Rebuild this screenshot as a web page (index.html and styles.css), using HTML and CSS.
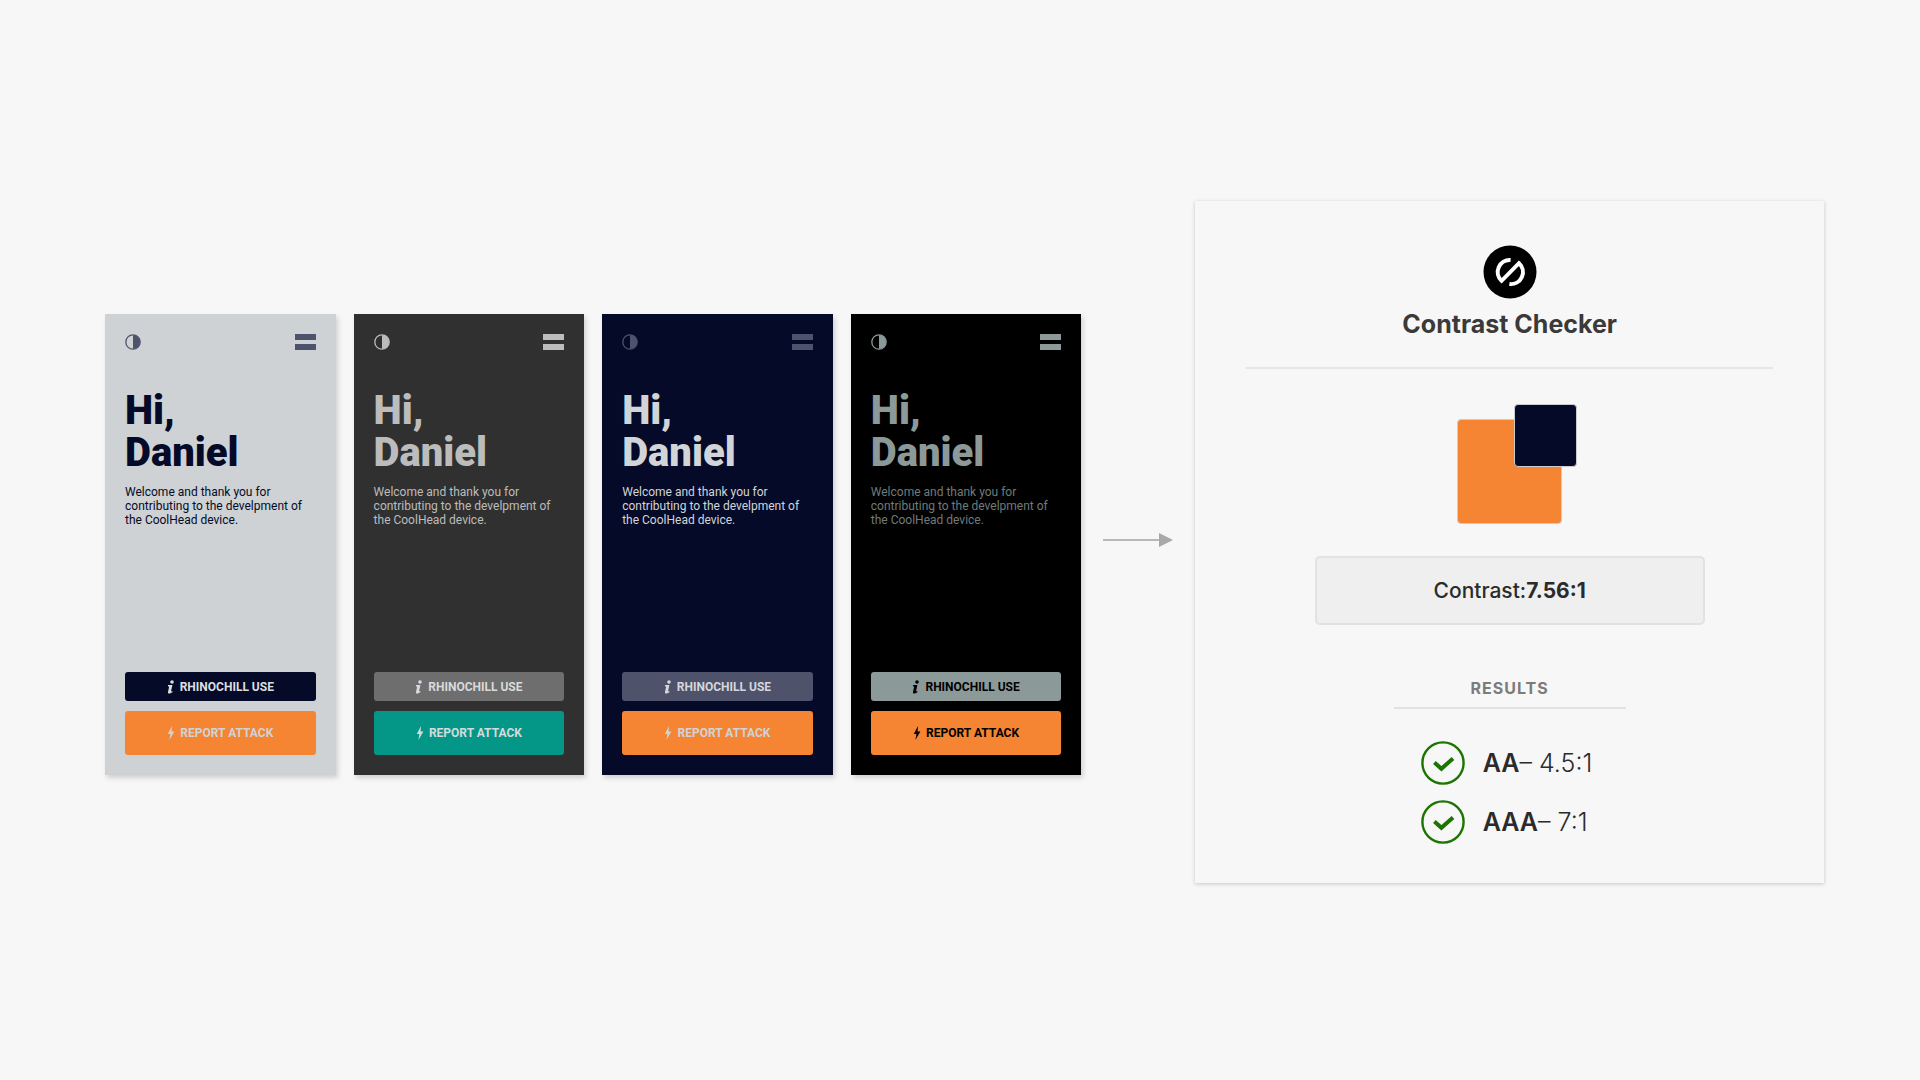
FILE: index.html
```html
<!DOCTYPE html>
<html lang="en">
<head>
    <meta charset="UTF-8">
    <title>Contrast Checker</title>
    <link rel="stylesheet" href="styles.css">
</head>
<body>
<svg class="defs" aria-hidden="true">
    <symbol id="half" viewBox="0 0 16 16">
        <circle cx="8" cy="8" r="7.2" fill="none" stroke="currentColor" stroke-width="1.3"/>
        <path d="M8 1a7 7 0 0 1 0 14z" fill="currentColor"/>
    </symbol>
    <symbol id="menu" viewBox="0 0 21 16">
        <path d="M0 0h21v6H0zM0 10h21v6H0z" fill="currentColor"/>
    </symbol>
    <symbol id="info" viewBox="0 0 8 14">
        <circle cx="5" cy="2" r="1.8" fill="currentColor"/>
        <path d="M1 5H5.4L4 11.6l1.4-.5v1.2L3 13.6H1.4L.9 12.6 2.2 6.6 1 6.4z" fill="currentColor"/>
    </symbol>
    <symbol id="bolt" viewBox="0 0 8 14">
        <path d="M5 0L.8 8h2.6L2.4 14 7.4 5.6H4.6z" fill="currentColor"/>
    </symbol>
    <symbol id="check" viewBox="0 0 44 44">
        <circle cx="22" cy="22" r="20.6" fill="none" stroke="#1c7500" stroke-width="2.4"/>
        <path d="M13.4 21.4l7 6.4L32 17.4" fill="none" stroke="#1c7500" stroke-width="4"/>
    </symbol>
</svg>
<main class="board">
    <section class="phones">
        <article class="phone light">
            <div class="bar">
                <button class="icon" aria-label="Theme"><svg width="16" height="16"><use href="#half"/></svg></button>
                <button class="icon" aria-label="Menu"><svg width="21" height="16"><use href="#menu"/></svg></button>
            </div>
            <h2>Hi,<br>Daniel</h2>
            <p>Welcome and thank you for<br>contributing to the develpment of<br>the CoolHead device.</p>
            <button class="btn use"><svg width="8" height="14"><use href="#info"/></svg>RHINOCHILL USE</button>
            <button class="btn report"><svg width="8" height="14"><use href="#bolt"/></svg>REPORT ATTACK</button>
        </article>
        <article class="phone gray">
            <div class="bar">
                <button class="icon" aria-label="Theme"><svg width="16" height="16"><use href="#half"/></svg></button>
                <button class="icon" aria-label="Menu"><svg width="21" height="16"><use href="#menu"/></svg></button>
            </div>
            <h2>Hi,<br>Daniel</h2>
            <p>Welcome and thank you for<br>contributing to the develpment of<br>the CoolHead device.</p>
            <button class="btn use"><svg width="8" height="14"><use href="#info"/></svg>RHINOCHILL USE</button>
            <button class="btn report"><svg width="8" height="14"><use href="#bolt"/></svg>REPORT ATTACK</button>
        </article>
        <article class="phone navy">
            <div class="bar">
                <button class="icon" aria-label="Theme"><svg width="16" height="16"><use href="#half"/></svg></button>
                <button class="icon" aria-label="Menu"><svg width="21" height="16"><use href="#menu"/></svg></button>
            </div>
            <h2>Hi,<br>Daniel</h2>
            <p>Welcome and thank you for<br>contributing to the develpment of<br>the CoolHead device.</p>
            <button class="btn use"><svg width="8" height="14"><use href="#info"/></svg>RHINOCHILL USE</button>
            <button class="btn report"><svg width="8" height="14"><use href="#bolt"/></svg>REPORT ATTACK</button>
        </article>
        <article class="phone black">
            <div class="bar">
                <button class="icon" aria-label="Theme"><svg width="16" height="16"><use href="#half"/></svg></button>
                <button class="icon" aria-label="Menu"><svg width="21" height="16"><use href="#menu"/></svg></button>
            </div>
            <h2>Hi,<br>Daniel</h2>
            <p>Welcome and thank you for<br>contributing to the develpment of<br>the CoolHead device.</p>
            <button class="btn use"><svg width="8" height="14"><use href="#info"/></svg>RHINOCHILL USE</button>
            <button class="btn report"><svg width="8" height="14"><use href="#bolt"/></svg>REPORT ATTACK</button>
        </article>
    </section>
    <svg class="arrow" width="70" height="18" viewBox="0 0 70 18" aria-hidden="true">
        <path d="M0 7h57" stroke="#b9b9b9" stroke-width="2"/>
        <path d="M56 0l14 7-14 7z" fill="#a9a9a9"/>
    </svg>
    <section class="checker">
        <header>
            <svg width="54" height="54" viewBox="0 0 54 54" aria-hidden="true">
                <circle cx="27" cy="27" r="26.5"/>
                <path d="M27.6 15A12 12 0 0 0 18.6 35.8L36 18.2A12 12 0 0 1 26.4 39" fill="none" stroke="#fff" stroke-width="4"/>
            </svg>
            <h1>Contrast Checker</h1>
        </header>
        <div class="swatches">
            <div class="swatch back"></div>
            <div class="swatch front"></div>
        </div>
        <div class="ratio">Contrast:<b>7.56:1</b></div>
        <h3>RESULTS</h3>
        <ul class="results">
            <li><svg width="44" height="44"><use href="#check"/></svg><span><b>AA</b>– 4.5:1</span></li>
            <li><svg width="44" height="44"><use href="#check"/></svg><span><b>AAA</b>– 7:1</span></li>
        </ul>
    </section>
</main>
</body>
</html>
```
FILE: styles.css
```css
* {
    margin: 0;
    padding: 0;
    box-sizing: border-box;
}

body {
    background: #f7f7f7;
    font-family: Inter, "Liberation Sans", sans-serif;
}

ul {
    list-style: none;
}

svg {
    display: block;
    flex: none;
}

button {
    border: 0;
    cursor: pointer;
}

.defs {
    display: none;
}

.board {
    min-height: 100vh;
    padding: 3px 96px 0 105px;
    display: grid;
    grid-template-columns: 977fr auto 629fr;
    align-items: center;
    gap: 22px;
}

.phones {
    display: grid;
    grid-template-columns: repeat(4, 1fr);
    gap: 18px;
    padding-top: 6px;
}

.phone {
    min-height: 461px;
    padding: 20px;
    display: flex;
    flex-direction: column;
    box-shadow: 2px 3px 5px rgba(0, 0, 0, 0.16);
    font-family: Roboto, sans-serif;
}

.bar {
    display: flex;
    justify-content: space-between;
    margin-bottom: 40px;
}

.icon {
    background: none;
    color: inherit;
}

.phone h2 {
    font-size: 40px;
    font-weight: 900;
    line-height: 42px;
    margin-bottom: 11px;
}

.phone p {
    font-size: 12px;
    line-height: 14px;
    white-space: nowrap;
    margin-bottom: auto;
}

.btn {
    display: flex;
    align-items: center;
    justify-content: center;
    gap: 5px;
    border-radius: 3px;
    font-family: Roboto, sans-serif;
    font-size: 12px;
    font-weight: 700;
}

.use {
    height: 29px;
    margin-bottom: 10px;
}

.report {
    height: 44px;
    background: #f58532;
}

.light {
    background: #ced2d5;
    color: #040a28;
}

.light .icon {
    color: #4e536d;
}

.light .use {
    background: #040a28;
    color: #dcdfe1;
}

.light .report, .navy .report {
    color: #d0d3d6;
}

.gray {
    background: #303030;
    color: #bcbcbc;
}

.gray .use {
    background: #6e6e6e;
    color: #d8dadb;
}

.gray .report {
    background: #049788;
    color: #d5dadb;
}

.navy {
    background: #040a28;
    color: #d2d5d7;
}

.navy .icon {
    color: #4e536d;
}

.navy .use {
    background: #4e526b;
    color: #d5d7dc;
}

.black {
    background: #000;
    color: #8b9998;
}

.black p {
    color: #6f7b7a;
}

.black .use {
    background: #8b9998;
    color: #000;
}

.black .report {
    color: #000;
}

.checker {
    padding: 44px 51px 39px;
    display: flex;
    flex-direction: column;
    align-items: center;
    box-shadow: 0 1px 4px rgba(0, 0, 0, 0.2);
    color: #2b2b2b;
}

.checker header {
    width: 100%;
    display: flex;
    flex-direction: column;
    align-items: center;
    padding-bottom: 27px;
    border-bottom: 2px solid #e6e6e6;
}

.checker h1 {
    font-size: 25px;
    line-height: 32px;
    margin-top: 9px;
    color: #3a3a3a;
}

/* the two colours being compared */
.swatches {
    position: relative;
    width: 105px;
    height: 105px;
    margin: 50px 0 32px;
}

.swatch {
    position: absolute;
    border: 1px solid #ccc;
    border-radius: 4px;
}

.back {
    inset: 0;
    background: #f58532;
}

.front {
    width: 63px;
    height: 63px;
    top: -15px;
    right: -15px;
    background: #040a28;
}

.ratio {
    width: 74%;
    height: 69px;
    display: flex;
    align-items: center;
    justify-content: center;
    background: #efefef;
    border: 2px solid #e2e2e2;
    border-radius: 5px;
    font-size: 21px;
    font-weight: 500;
    margin-bottom: 50px;
}

.ratio b {
    font-weight: 700;
}

.checker h3 {
    width: 232px;
    padding-bottom: 6px;
    border-bottom: 2px solid #e2e2e2;
    color: #7c7c7c;
    font-size: 16px;
    line-height: 26px;
    letter-spacing: 1px;
    text-align: center;
}

.results {
    width: 178px;
    margin-top: 32px;
    display: grid;
    gap: 15px;
}

.results li {
    display: flex;
    align-items: center;
    gap: 18px;
    font-size: 25px;
    font-weight: 300;
    white-space: nowrap;
}

.results b {
    font-weight: 600;
}
```
